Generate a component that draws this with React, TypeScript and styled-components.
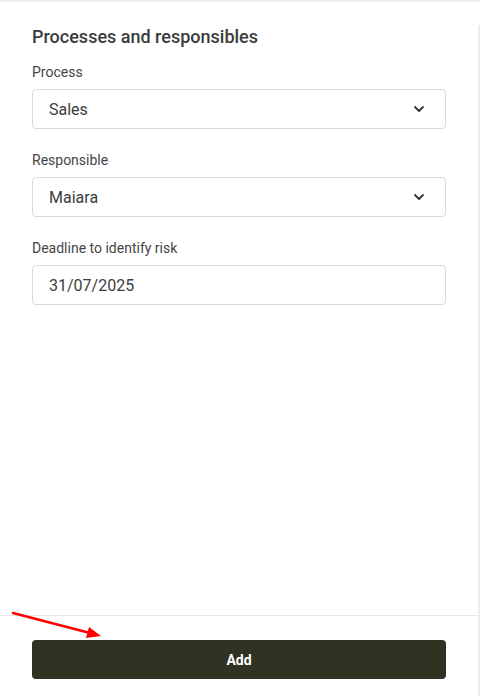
import React from 'react';
import styled, { createGlobalStyle } from 'styled-components';

const GlobalStyle = createGlobalStyle`
  html, body {
    margin: 0;
    padding: 0;
    background: #fff;
  }
  body {
    font-family: Roboto, "Liberation Sans", Arial, sans-serif;
    color: #3a3a3a;
  }
`;

const Page = styled.div`
  position: relative;
  width: 480px;
  height: 696px;
  border-top: 2px solid #f1f1f1;
  box-sizing: border-box;
  display: flex;
  overflow: hidden;
`;

const Panel = styled.div`
  flex: 1;
  display: flex;
  flex-direction: column;
`;

const Rail = styled.div`
  width: 2px;
  margin-top: 23px;
  background: #ececec;
`;

const Form = styled.div`
  flex: 1;
  padding: 23px 32px 0 32px;
  display: flex;
  flex-direction: column;
`;

const Title = styled.h2`
  margin: 0 0 13px;
  font-size: 18px;
  line-height: 24px;
  font-weight: 500;
  color: #3b3b3b;
`;

const Field = styled.div`
  display: flex;
  flex-direction: column;
  margin-bottom: 21px;
`;

const Label = styled.label`
  font-size: 14px;
  line-height: 20px;
  color: #454545;
  margin-bottom: 7px;
`;

const Box = styled.div`
  height: 40px;
  box-sizing: border-box;
  border: 1px solid #d9d9d9;
  border-radius: 4px;
  padding: 0 21px 0 16px;
  display: flex;
  align-items: center;
  justify-content: space-between;
  font-size: 16px;
  color: #3d3d3d;
  background: #fff;
`;

const Chevron = styled.svg`
  width: 10px;
  height: 6px;
  flex-shrink: 0;
`;

const Footer = styled.div`
  border-top: 1px solid #e6e6e6;
  padding: 24px 32px 17px;
`;

const AddButton = styled.button`
  width: 100%;
  height: 39px;
  border: none;
  border-radius: 4px;
  background: #313322;
  color: #fff;
  font-family: Roboto, "Liberation Sans", Arial, sans-serif;
  font-size: 14px;
  font-weight: 700;
  cursor: pointer;
`;

const Arrow = styled.svg`
  position: absolute;
  left: 0;
  top: 600px;
  width: 120px;
  height: 45px;
  pointer-events: none;
`;

const Select = ({ value }: { value: string }) => (
  <Box>
    <span>{value}</span>
    <Chevron viewBox="0 0 10 6">
      <path d="M1 1l4 4 4-4" fill="none" stroke="#2f3440" strokeWidth="1.8" strokeLinecap="round" strokeLinejoin="round" />
    </Chevron>
  </Box>
);

const App = () => {
  return (
    <>
      <GlobalStyle />
      <Page>
        <Panel>
          <Form>
            <Title>Processes and responsibles</Title>
            <Field>
              <Label>Process</Label>
              <Select value="Sales" />
            </Field>
            <Field>
              <Label>Responsible</Label>
              <Select value="Maiara" />
            </Field>
            <Field>
              <Label>Deadline to identify risk</Label>
              <Box>31/07/2025</Box>
            </Field>
          </Form>
          <Footer>
            <AddButton>Add</AddButton>
          </Footer>
        </Panel>
        <Rail />
        <Arrow viewBox="0 0 120 45">
          <line x1="13" y1="11" x2="90" y2="31" stroke="#ff0000" strokeWidth="2.6" strokeLinecap="round" />
          <polygon points="101,34 86,36 89,25" fill="#ff0000" />
        </Arrow>
      </Page>
    </>
  );
};

export default App;
